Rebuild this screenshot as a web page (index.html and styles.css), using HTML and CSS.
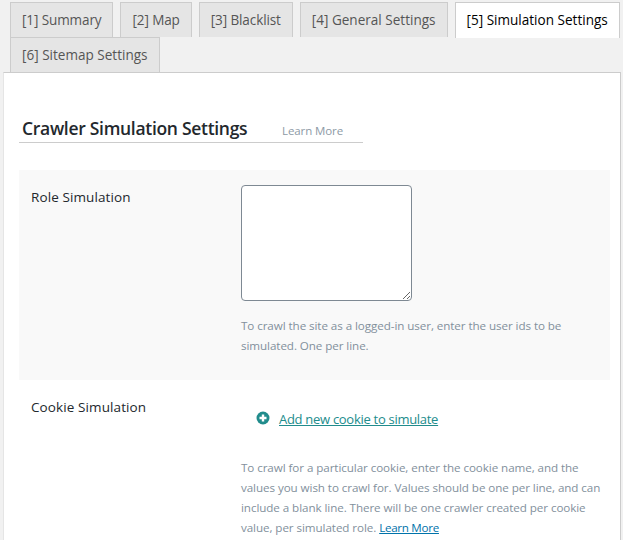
FILE: index.html
```html
<!DOCTYPE html>
<html lang="en">
<head>
<meta charset="utf-8">
<title>Crawler Simulation Settings</title>
<link rel="stylesheet" href="styles.css">
</head>
<body>
<nav class="tabs">
  <a class="tab tab-tight">[1] Summary</a>
  <a class="tab tab-tight">[2] Map</a>
  <a class="tab tab-tight">[3] Blacklist</a>
  <a class="tab">[4] General Settings</a>
  <a class="tab tab-active">[5] Simulation Settings</a>
  <a class="tab">[6] Sitemap Settings</a>
</nav>
<main class="panel">
  <div class="title-row">
    <h3 class="title">Crawler Simulation Settings</h3>
    <a class="title-link">Learn More</a>
  </div>
  <section class="row row-shaded">
    <div class="label">Role Simulation</div>
    <div class="field">
      <textarea class="input"></textarea>
      <p class="desc desc-role">To crawl the site as a logged-in user, enter the user ids to be simulated. One per line.</p>
    </div>
  </section>
  <section class="row">
    <div class="label">Cookie Simulation</div>
    <div class="field">
      <div class="add">
        <svg class="add-icon" width="14" height="14" viewBox="0 0 14 14"><circle cx="7" cy="7" r="6.5" fill="#218c8c"/><path d="M7 3.5v7M3.5 7h7" stroke="#fff" stroke-width="2.4"/></svg>
        <a class="add-link">Add new cookie to simulate</a>
      </div>
      <p class="desc">To crawl for a particular cookie, enter the cookie name, and the values you wish to crawl for. Values should be one per line, and can include a blank line. There will be one crawler created per cookie value, per simulated role. <a class="desc-link">Learn More</a></p>
    </div>
  </section>
</main>
</body>
</html>
```
FILE: styles.css
```css
html, body {
  margin: 0;
  height: 540px;
  overflow: hidden;
}
body {
  background: #f1f1f1;
  color: #444;
  font-family: "Open Sans", "Noto Sans", sans-serif;
  font-size: 13px;
}
.tabs {
  display: flex;
  flex-wrap: wrap;
  column-gap: 7px;
  padding: 2px 0 0 10px;
  width: 623px;
  box-sizing: border-box;
}
.tab {
  box-sizing: border-box;
  height: 35px;
  padding: 0 11px;
  border: 1px solid #ccc;
  border-bottom: 0;
  background: #e5e5e5;
  color: #555;
  font-size: 13.55px;
  font-weight: 500;
  line-height: 35px;
  white-space: nowrap;
}
.tab-tight {
  letter-spacing: -0.12px;
}
.tab-active {
  height: 36px;
  margin-bottom: -1px;
  background: #fff;
  color: #000;
  position: relative;
  z-index: 1;
}
.panel {
  box-sizing: border-box;
  width: 618px;
  margin-left: 3px;
  height: 600px;
  padding: 44px 10px 0 15px;
  background: #fff;
  border: 1px solid #ccc;
  border-width: 1px 1px 0 1px;
  border-left-color: #e5e5e5;
}
.title-row {
  display: flex;
  align-items: baseline;
  width: 344px;
  height: 26px;
  padding-left: 3px;
  box-sizing: border-box;
  border-bottom: 1px solid #ccc;
}
.title {
  margin: 0;
  width: 260px;
  color: #23282d;
  font-size: 17.5px;
  font-weight: 600;
  line-height: 23px;
  letter-spacing: -0.3px;
}
.title-link {
  color: #8d9aa6;
  font-size: 11.5px;
  letter-spacing: -0.1px;
}
.row {
  display: flex;
}
.row-shaded {
  background: #f9f9f9;
  margin-top: 27px;
  height: 210px;
}
.label {
  box-sizing: border-box;
  width: 222px;
  padding: 17px 0 0 12px;
  color: #23282d;
  font-size: 13.5px;
  font-weight: 500;
  line-height: 20px;
  letter-spacing: 0.1px;
}
.field {
  flex: 1;
  padding-top: 15px;
}
.input {
  display: block;
  box-sizing: border-box;
  width: 171px;
  height: 116px;
  margin: 0;
  background: #fff;
  border: 1px solid #7e8993;
  border-radius: 4px;
}
.desc {
  margin: 15px 0 0;
  width: 365px;
  color: #82909c;
  font-size: 11.65px;
  line-height: 20px;
  letter-spacing: -0.08px;
}
.desc-role {
  margin-top: 15px;
}
.add {
  display: flex;
  align-items: center;
  gap: 9px;
  padding: 14px 0 0 15px;
  height: 20px;
}
.add-icon {
  margin-bottom: 2px;
}
.add-link {
  color: #218c8c;
  font-size: 13px;
  letter-spacing: -0.29px;
  text-decoration: underline;
}
.add + .desc {
  margin-top: 29px;
}
.desc-link {
  color: #0073aa;
  letter-spacing: -0.3px;
  text-decoration: underline;
}
```
